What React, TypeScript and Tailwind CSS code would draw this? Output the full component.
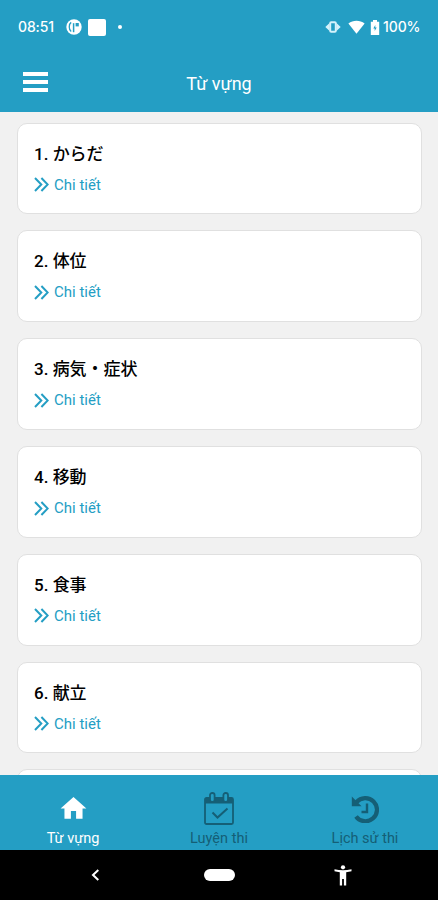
import type { ReactNode } from 'react';
import { MdHome } from 'react-icons/md';

const lessons = ['からだ', '体位', '病気・症状', '移動', '食事', '献立'];

function StatusBar() {
  return (
    <div className="flex h-[54px] items-center justify-between pl-[18px] pr-[17px] text-white">
      <div className="flex items-center">
        <span className="w-[37px] whitespace-nowrap pb-px font-['Inter'] text-[14px] font-medium tracking-[-0.15px]">
          08:51
        </span>
        <svg className="ml-[11px]" width="16" height="16" viewBox="0 0 16 16">
          <circle cx="8" cy="8" r="7.7" fill="#fff" />
          <path d="M5.2 3.4C2.6 5.2 2.6 10.6 5.2 12.6" fill="none" stroke="#249ec4" strokeWidth="1.3" />
          <path d="M7.6 13.2V4.2" fill="none" stroke="#249ec4" strokeWidth="1.5" />
          <path d="M9.6 4h3.2v3.4H9.6z" fill="#249ec4" />
        </svg>
        <span className="ml-[6px] h-[17px] w-[18px] rounded-[2px] bg-white" />
        <span className="ml-[12px] h-1 w-1 rounded-full bg-white" />
      </div>
      <div className="flex items-center">
        <svg width="16" height="12" viewBox="0 0 16 12" fill="#d5f2fb">
          <path d="M4.6 2v8L.3 6zM11.4 2v8L15.7 6z" />
          <rect x="5.2" y="1.2" width="5.6" height="9.6" rx="1" fill="none" stroke="#d5f2fb" strokeWidth="2" />
        </svg>
        <svg className="ml-[7px]" width="17" height="14" viewBox="0 0 17 14">
          <path d="M.4 3.6C5-.2 12-.2 16.6 3.6L8.5 13.7z" fill="#fff" />
        </svg>
        <svg className="ml-[5px]" width="10" height="15" viewBox="0 0 10 15">
          <path d="M3 0h4v1.8h2.2V15H.8V1.8H3z" fill="#fff" />
          <path d="M5.3 5v2.6h1.4L4.7 11V8.6H3.3z" fill="#249ec4" />
        </svg>
        <span className="ml-[3px] w-[38px] whitespace-nowrap pb-px font-['Inter'] text-[14px] font-medium tracking-[-0.1px]">
          100%
        </span>
      </div>
    </div>
  );
}

function Header() {
  return (
    <header className="relative flex h-[58px] items-center justify-center pt-[2px] text-white">
      <button className="absolute left-[23px] top-[18px] flex flex-col gap-[3.5px]" aria-label="Menu">
        <span className="h-[4.3px] w-[25px] bg-white" />
        <span className="h-[4.3px] w-[25px] bg-white" />
        <span className="h-[4.3px] w-[25px] bg-white" />
      </button>
      <h1 className="text-[18px] leading-6">Từ vựng</h1>
    </header>
  );
}

function LessonCard({ index, title }: { index: number; title: string }) {
  return (
    <div className="h-[91.8px] shrink-0 rounded-[10px] border border-[#e0e0e0] bg-white pl-4 pt-[18px]">
      <h2 className="text-[17px] font-medium leading-6 text-black">
        {index}. {title}
      </h2>
      <div className="mt-[9px] flex items-center text-[#249ec4]">
        <svg width="15" height="15" viewBox="0 0 15 15" fill="none" stroke="currentColor" strokeWidth="2">
          <path d="M1 1l6.3 6.5L1 14M7.4 1l6.3 6.5L7.4 14" />
        </svg>
        <span className="ml-[5px] text-[15px] leading-5">Chi tiết</span>
      </div>
    </div>
  );
}

function TabItem({ label, active, children }: { label: string; active?: boolean; children: ReactNode }) {
  return (
    <div className={`flex flex-1 flex-col items-center ${active ? 'text-white' : 'text-[#155f76]'}`}>
      <div className="flex h-[55px] items-center pt-[12px]">{children}</div>
      <span className="whitespace-nowrap text-[14.5px] leading-[18px]">{label}</span>
    </div>
  );
}

function CalendarCheck() {
  return (
    <svg width="30" height="33" viewBox="0 0 30 33" fill="none" stroke="currentColor" strokeWidth="1.8">
      <rect x="1" y="6" width="28" height="26" rx="1.5" />
      <path d="M1 6h28v5.5H1z" fill="currentColor" stroke="none" />
      <rect x="6" y="1" width="4.6" height="9" rx="2.2" fill="#249ec4" />
      <rect x="19.4" y="1" width="4.6" height="9" rx="2.2" fill="#249ec4" />
      <path d="M8.5 20.5l5 5 10-9" strokeWidth="2" />
    </svg>
  );
}

function HistoryIcon() {
  return (
    <svg width="28" height="28" viewBox="0 0 28 28" fill="none" stroke="currentColor">
      <path d="M5.5 7.2A11.6 11.6 0 1 1 5 21.5" strokeWidth="4.2" />
      <path d="M.8 1.5v9.8h9.8z" fill="currentColor" stroke="none" />
      <path d="M16 8.5v8.5H10.5" strokeWidth="2.4" />
    </svg>
  );
}

function SystemNav() {
  return (
    <div className="flex h-[50px] shrink-0 items-center bg-black">
      <svg className="ml-[91px]" width="9" height="12" viewBox="0 0 9 12" fill="none" stroke="#fff" strokeWidth="2">
        <path d="M7.3 1L2 6l5.3 5" />
      </svg>
      <span className="ml-[104px] h-3 w-[31px] rounded-full bg-white" />
      <svg className="ml-[99px]" width="18" height="21" viewBox="0 0 18 21" fill="#fff">
        <circle cx="9" cy="2.3" r="2.1" />
        <path d="M.5 4.2C6 5.6 12 5.6 17.5 4.2V6.3L12.2 7.3V20.5H9.9V14H8.1V20.5H5.8V7.3L.5 6.3z" />
      </svg>
    </div>
  );
}

export default function App() {
  return (
    <div className="flex h-[900px] w-full flex-col overflow-hidden bg-[#f1f1f1] font-['Roboto','Noto_Sans_CJK_JP',sans-serif]">
      <div className="h-[112px] shrink-0 bg-[#249ec4]">
        <StatusBar />
        <Header />
      </div>

      <main className="flex min-h-0 flex-1 flex-col gap-4 overflow-hidden pl-[17px] pr-[16px] pt-[10.7px]">
        {lessons.map((title, i) => (
          <LessonCard key={title} index={i + 1} title={title} />
        ))}
        {/* top edge of the next card */}
        <div className="h-[91.8px] shrink-0 rounded-[10px] border border-[#e0e0e0] bg-white" />
      </main>

      <nav className="flex h-[75px] shrink-0 bg-[#249ec4]">
        <TabItem label="Từ vựng" active>
          <MdHome size={31} />
        </TabItem>
        <TabItem label="Luyện thi">
          <CalendarCheck />
        </TabItem>
        <TabItem label="Lịch sử thi">
          <HistoryIcon />
        </TabItem>
      </nav>
      <SystemNav />
    </div>
  );
}
